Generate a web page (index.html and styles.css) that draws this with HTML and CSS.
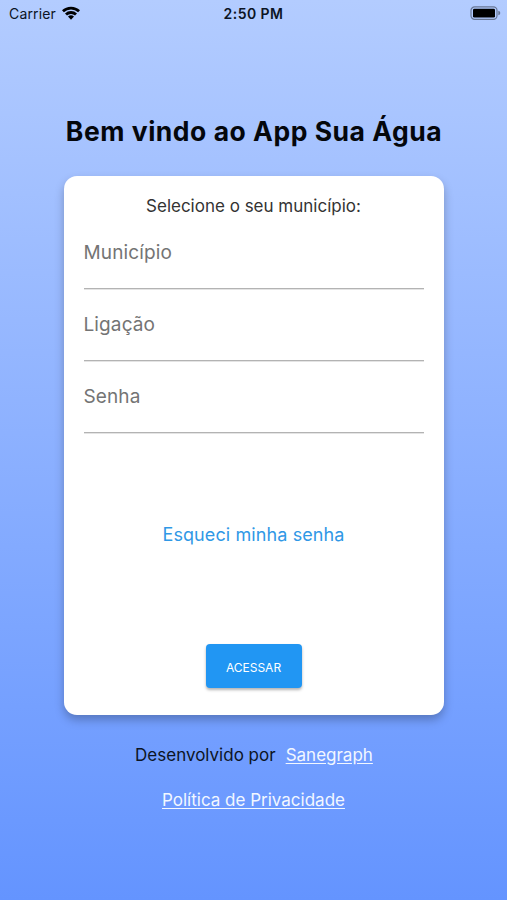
FILE: index.html
```html
<!DOCTYPE html>
<html lang="pt-BR">
<head>
<meta charset="utf-8">
<title>Sua Água</title>
<link rel="stylesheet" href="styles.css">
</head>
<body>
<header class="status">
  <div class="carrier"><span>Carrier</span>
    <svg class="wifi" viewBox="0 0 18 14" width="18" height="14"><path d="M0 4.3A13 13 0 0 1 18 4.3L16.1 6.3A10.3 10.3 0 0 0 1.9 6.3Z"/><path d="M3 7.5A8.7 8.7 0 0 1 15 7.5L13 9.5A5.8 5.8 0 0 0 5 9.5Z"/><path d="M6 10.6A4.4 4.4 0 0 1 12 10.6L9 13.7Z"/></svg>
  </div>
  <time class="time">2:50 PM</time>
  <svg class="battery" viewBox="0 0 31 14" width="31" height="14"><rect x="1" y=".9" width="26" height="12.4" rx="3.6" fill="none" stroke="#000" stroke-opacity=".42" stroke-width="1.2"/><rect x="3" y="2.7" width="22" height="8.9" rx="1.4"/><path d="M28.3 4.8Q30.3 5.2 30.3 7T28.3 9.2Z" fill-opacity=".42"/></svg>
</header>
<main class="page">
  <h1 class="title">Bem vindo ao App Sua Água</h1>
  <form class="card">
    <p class="prompt">Selecione o seu município:</p>
    <div class="field">Município</div>
    <div class="field">Ligação</div>
    <div class="field">Senha</div>
    <a class="forgot">Esqueci minha senha</a>
    <button class="enter" type="button">ACESSAR</button>
  </form>
  <p class="credit"><span>Desenvolvido por</span><a class="link">Sanegraph</a></p>
  <p class="privacy"><a class="link">Política de Privacidade</a></p>
</main>
</body>
</html>
```
FILE: styles.css
```css
* { box-sizing: border-box; }
body {
  margin: 0;
  height: 900px;
  overflow: hidden;
  font-family: Inter, "Liberation Sans", sans-serif;
  color: #0c1424;
  background: linear-gradient(#b3ccff, #6494ff);
}
h1, p { margin: 0; }
.status {
  display: grid;
  grid-template-columns: 1fr auto 1fr;
  align-items: center;
  height: 26px;
  padding: 0 6px 0 9px;
  font-size: 14px;
}
.carrier { display: flex; align-items: center; gap: 6px; letter-spacing: .15px; }
.time { margin-right: 3px; font-size: 14px; font-weight: 600; letter-spacing: .45px; }
.battery { justify-self: end; }
.page { display: flex; flex-direction: column; align-items: center; }
.title {
  margin-top: 85px;
  height: 40px;
  padding-left: 1px;
  line-height: 40px;
  font-size: 26.5px;
  font-weight: 650;
  letter-spacing: .52px;
  color: #04070c;
  white-space: nowrap;
}
.card {
  display: flex;
  flex-direction: column;
  align-items: center;
  width: 380px;
  height: 539px;
  margin-top: 25px;
  padding: 19px 20px 0;
  border-radius: 13px;
  background: #fff;
  box-shadow: 0 5px 10px rgba(0, 0, 0, .25);
}
.prompt { height: 22px; line-height: 23px; font-size: 17px; color: #333; }
.field {
  width: 100%;
  height: 72px;
  padding-top: 20px;
  border-bottom: 1.5px solid #b3b3b3;
  box-shadow: 0 1px #e4e4e4;
  line-height: 31px;
  font-size: 19px;
  letter-spacing: .12px;
  color: #747474;
}
.forgot { margin-top: 87px; line-height: 30px; font-size: 18px; letter-spacing: .1px; color: #2f98e6; }
.enter {
  width: 96px;
  height: 44px;
  margin-top: 94px;
  padding: 2px 0 0;
  border: 0;
  border-radius: 4px;
  background: #2196f3;
  box-shadow: 0 2px 3px rgba(0, 0, 0, .3);
  font: 12px Inter, sans-serif;
  color: #fff;
}
.credit { display: flex; gap: 10px; margin-top: 28px; padding-left: 1px; line-height: 24px; font-size: 17px; }
.privacy { margin-top: 21px; line-height: 24px; font-size: 17px; }
.link { color: #f2f7ff; text-decoration: underline; text-underline-offset: 2px; }
```
